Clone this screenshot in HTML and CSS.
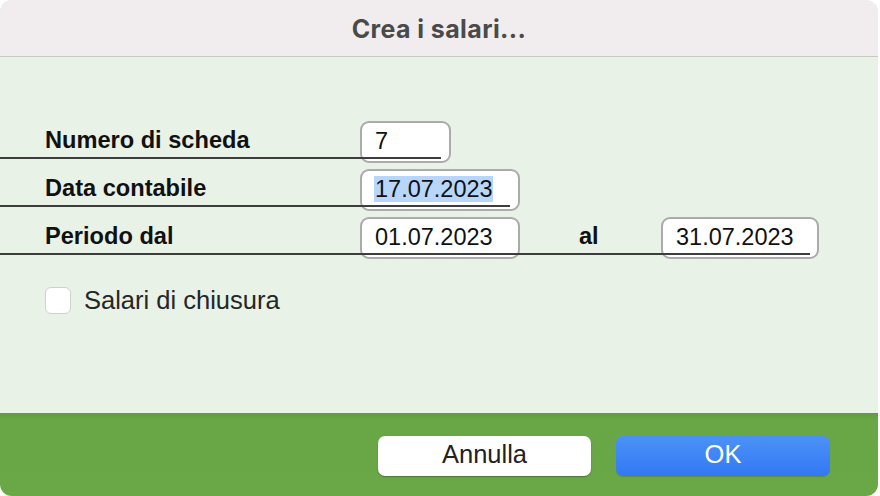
FILE: index.html
```html
<!DOCTYPE html>
<html lang="it">
<head>
<meta charset="utf-8">
<title>Crea i salari...</title>
<link rel="stylesheet" href="styles.css">
</head>
<body>
<div class="window">
  <header class="titlebar">
    <h1 class="title">Crea i salari...</h1>
  </header>
  <main class="content">
    <div class="row row-1">
      <span class="label">Numero di scheda</span>
      <div class="field field-short">7</div>
    </div>
    <div class="row row-2">
      <span class="label">Data contabile</span>
      <div class="field"><span class="sel">17.07.2023</span></div>
    </div>
    <div class="row row-3">
      <span class="label">Periodo dal</span>
      <div class="field">01.07.2023</div>
      <span class="label-al">al</span>
      <div class="field field-to">31.07.2023</div>
    </div>
    <label class="check">
      <span class="box"></span>
      <span class="check-text">Salari di chiusura</span>
    </label>
  </main>
  <footer class="actions">
    <button class="btn">Annulla</button>
    <button class="btn primary">OK</button>
  </footer>
</div>
</body>
</html>
```
FILE: styles.css
```css
html, body {
  margin: 0;
  padding: 0;
  background: #ffffff;
}

body {
  width: 880px;
  height: 496px;
  overflow: hidden;
  font-family: "Liberation Sans", Arial, sans-serif;
}

.window {
  width: 878px;
  height: 496px;
  border-radius: 12px;
  overflow: hidden;
  display: flex;
  flex-direction: column;
  background: #e8f2e6;
}

.titlebar {
  height: 56px;
  flex: 0 0 56px;
  background: #f1edee;
  border-bottom: 1px solid #c4ccc2;
  display: flex;
  align-items: center;
  justify-content: center;
}

.title {
  margin: 0;
  font-family: Inter, "Noto Sans", sans-serif;
  font-weight: 700;
  font-size: 25px;
  letter-spacing: 0.4px;
  color: #4a4a4a;
  padding-top: 1px;
}

.content {
  flex: 1;
  padding: 64px 0 0 0;
  background: #e8f2e6;
}

.row {
  position: relative;
  display: flex;
  align-items: flex-start;
  height: 48px;
  padding-left: 45px;
}

.row::after {
  content: "";
  position: absolute;
  left: 0;
  top: 36px;
  height: 2px;
  background: #3d3d3d;
}

.row-1::after { width: 441px; }
.row-2::after { width: 510px; }
.row-3::after { width: 810px; }

.label {
  width: 315px;
  font-weight: 700;
  font-size: 23.6px;
  line-height: 36px;
  padding-top: 1px;
  color: #111;
}

.label-al {
  width: 82px;
  margin-left: 59px;
  font-weight: 700;
  font-size: 23.6px;
  line-height: 36px;
  padding-top: 1px;
  color: #111;
}

.field {
  box-sizing: border-box;
  width: 160px;
  height: 42px;
  padding: 0 13px;
  border: 2px solid #ababab;
  border-radius: 9px;
  background: #ffffff;
  font-size: 23.5px;
  line-height: 36px;
  color: #111;
}

.field-short { width: 91px; }
.field-to { width: 158px; }

.sel {
  background: #b8d6fa;
  margin-left: -1px;
  padding-left: 1px;
}

.check {
  display: flex;
  align-items: center;
  gap: 13px;
  margin: 21px 0 0 45px;
}

.box {
  box-sizing: border-box;
  width: 26px;
  height: 27px;
  border: 1px solid #cfd1cf;
  border-radius: 6px;
  background: #ffffff;
}

.check-text {
  font-size: 25.5px;
  color: #262626;
}

.actions {
  flex: 0 0 83px;
  box-sizing: border-box;
  padding: 23px 48px 0 0;
  display: flex;
  justify-content: flex-end;
  align-items: flex-start;
  gap: 25px;
  background: linear-gradient(to bottom, #619c3e 0, #69a746 7px, #6aa847 100%);
}

.btn {
  box-sizing: border-box;
  width: 213px;
  height: 40px;
  padding: 0 0 4px 0;
  border: none;
  border-radius: 7px;
  background: #ffffff;
  box-shadow: 0 1px 1.5px rgba(0, 0, 0, 0.3);
  font-family: "Liberation Sans", Arial, sans-serif;
  font-size: 25.5px;
  color: #222;
}

.btn.primary {
  width: 214px;
  background: linear-gradient(to bottom, #4b92f7, #3378f4);
  box-shadow: 0 1px 1px rgba(0, 0, 0, 0.15);
  color: #ffffff;
}
```
